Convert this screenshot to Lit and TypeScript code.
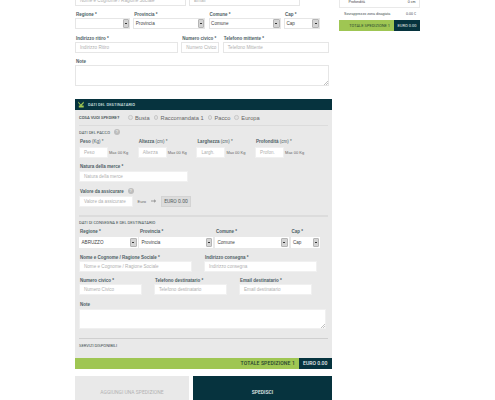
import { LitElement, html, css } from "lit";
import { customElement } from "lit/decorators.js";

@customElement("app-root")
export class AppRoot extends LitElement {
  static styles = css`
    :host { display: block; width: 495px; height: 400px; overflow: hidden; background: #fff; font-family: "Liberation Sans", Arial, sans-serif; color: #333; }
    .page { display: flex; align-items: flex-start; padding-left: 75px; }
    .main { width: 257px; flex: none; }
    .side { width: 81px; flex: none; margin-left: 7px; margin-right: 0; }
    .row { display: flex; }
    .fld { display: flex; flex-direction: column; flex: none; }
    label { display: block; font: bold 4.5px/7px "Liberation Sans", sans-serif; color: #4d6065; height: 7px; white-space: nowrap; padding-left: 1px; }
    label span { font-weight: normal; }
    .inp { box-sizing: border-box; background: #fff; border: 1px solid #e6e6e6; font-size: 4.6px; color: #b0b0b0; display: flex; align-items: center; padding-left: 4px; white-space: nowrap; overflow: hidden; }
    .panel .inp { border-color: #f0f0f0; }
    .h11 { height: 11px; }
    .sel { box-sizing: border-box; background: #fff; border: 1px solid #e6e6e6; display: flex; align-items: center; justify-content: space-between; font-size: 4.6px; color: #444; padding-left: 1.5px; }
    .panel .sel { border-color: #fff; }
    .arr { box-sizing: border-box; width: 6.5px; align-self: stretch; background: #d4d4d4; border: 1px solid #b5b5b5; border-radius: 1px; display: flex; align-items: center; justify-content: center; }
    .arr i { display: block; width: 2px; height: 1px; background: #333; }
    .top { height: 5.6px; margin-bottom: 5.4px; }
    .top .inp { height: 11px; flex: none; margin-top: -5.4px; }
    .top .inp.a { margin-right: 3px; }
    .w111 { width: 111px; }
    .ta { box-sizing: border-box; background: #fff; border: 1px solid #e6e6e6; position: relative; }
    .ta1 { width: 254px; height: 21px; }
    .ta2 { width: 247px; height: 20px; margin-top: .8px; border-color: #f0f0f0; }
    .grip { position: absolute; right: 0; bottom: 0; }
    .head { height: 11.4px; background: #06333e; display: flex; align-items: center; gap: 4px; padding-left: 3px; margin-top: 12.6px; font: 500 4px "Roboto", sans-serif; color: #d8e4e6; box-sizing: border-box; letter-spacing: .1px; }
    .panel { background: #e9e9e9; padding: 0 4px; height: 248.3px; box-sizing: border-box; }
    .what { display: flex; align-items: center; height: 15px; border-bottom: 1.5px solid #dcdcdc; font: 4.1px "Roboto", sans-serif; color: #3a4a4d; white-space: nowrap; }
    .what b { font-weight: 500; width: 49px; flex: none; }
    .radio { font: 5.7px "Liberation Sans", sans-serif; color: #666; display: flex; align-items: center; gap: 2.5px; margin-right: 4px; }
    .radio::before { content: ""; box-sizing: border-box; width: 4.5px; height: 4.5px; border: 1px solid #c9c9c9; border-radius: 50%; background: #e2e2e2; }
    .sec { font: 4.1px/7px "Roboto", sans-serif; color: #3a4a4d; display: flex; align-items: center; gap: 4px; height: 7px; white-space: nowrap; }
    .lab-q { font: bold 4.5px/7px "Liberation Sans", sans-serif; color: #4d6065; padding-left: 1px; gap: 4px; }
    .q { display: flex; align-items: center; justify-content: center; width: 6px; height: 6px; border-radius: 50%; background: #bdbdbd; color: #ececec; font: bold 4px/6px "Liberation Sans", sans-serif; }
    .max { font-size: 4px; color: #666; margin-left: 1px; white-space: nowrap; }
    .mr { display: flex; align-items: center; height: 11px; }
    .dim { width: 58.7px; }
    .dim .inp { width: 29px; height: 11px; }
    .val .inp { width: 54px; height: 11px; }
    .gap1 { margin-top: 1.5px; }
    .gap2 { margin-top: 1.7px; }
    .gap3 { margin-top: 1.2px; }
    .eu { margin-left: 4.5px; margin-right: 5px; }
    .arrow { margin-right: 5px; }
    .euro { background: #dcdcdc; height: 11px; width: 30px; display: flex; align-items: center; justify-content: center; font: 5px "Roboto", sans-serif; color: #55605f; border: 1px solid #d3d3d3; box-sizing: border-box; }
    .div { height: 1px; background: #cfcfcf; }
    .rule { height: 1.7px; background: #dcdcdc; margin-top: 8.3px; }
    .sp-r2 { margin-top: 5.6px; }
    .sp-note { margin-top: 5.6px; }
    .m-sec1 { margin-top: 2.7px; }
    .m-dims { margin-top: 2.3px; }
    .m-nat { margin-top: 5px; }
    .m-val { margin-top: 5.2px; }
    .m-sec2 { margin-top: 2.8px; }
    .m-sels { margin-top: 1.7px; }
    .m-nome { margin-top: 6px; }
    .m-num { margin-top: 5.7px; }
    .m-note { margin-top: 5.5px; }
    .m-div { margin-top: 9.3px; width: 249px; }
    .m-serv { margin-top: 3.3px; }
    .w-nat { width: 109px; }
    .tot { display: flex; height: 11px; background: #9fc653; justify-content: flex-end; font: 500 5.1px/11px "Roboto", sans-serif; color: #1f3e2f; }
    .tot .pad { margin-right: 3.5px; letter-spacing: .12px; }
    .tot .e { background: #06333e; color: #e7efef; width: 33.5px; text-align: center; }
    .btns { display: flex; gap: 4px; margin-top: 7px; }
    .btn { height: 40px; box-sizing: border-box; display: flex; align-items: flex-start; justify-content: center; font: 5px/7px "Roboto", sans-serif; padding-top: 13px; }
    .b1 { width: 114px; background: #e9e9e9; color: #b3b3b3; }
    .b2 { width: 139px; background: #06333e; color: #e7efef; font-weight: 500; }
    .box { border: 1px solid #e9e9e9; border-top: 0; height: 8px; box-sizing: border-box; display: flex; justify-content: space-between; align-items: flex-start; padding: 0 3.5px 0 8.5px; font-size: 3.6px; line-height: 5px; color: #444; margin-bottom: 4px; }
    .sur { display: flex; justify-content: space-between; font-size: 3.6px; line-height: 5px; color: #3d4c50; padding: 0 4px 0 5px; margin-bottom: 3px; white-space: nowrap; }
    .stot { display: flex; height: 11px; background: #9fc653; font: 4px/11px "Roboto", sans-serif; color: #2c4a30; }
    .stot .l { flex: 1; text-align: right; padding-right: 4px; white-space: nowrap; }
    .stot .e { background: #06333e; color: #e7efef; width: 26px; text-align: center; }
  `;

  private f(w: number, mr: number, label: string, ph: string) {
    return html`<div class="fld" style="width:${w}px;margin-right:${mr}px"><label>${label}</label><div class="inp h11">${ph}</div></div>`;
  }

  private s(w: number, mr: number, label: string, val: string, gap = "") {
    return html`<div class="fld" style="width:${w}px;margin-right:${mr}px"><label>${label}</label><div class="sel h11 ${gap}"><span>${val}</span><span class="arr"><i></i></span></div></div>`;
  }

  private dim(label: string, unit: string, ph: string) {
    return html`<div class="fld dim"><label>${label} <span>${unit}</span></label><div class="mr gap1"><div class="inp">${ph}</div><span class="max">Max 00 Kg</span></div></div>`;
  }

  private grip() {
    return html`<svg class="grip" width="4" height="4" viewBox="0 0 4 4"><path d="M0 4 4 0M2 4 4 2" stroke="#999" stroke-width=".6"/></svg>`;
  }

  render() {
    return html`<div class="page">
      <div class="main">
        <div class="row top">
          <div class="inp a w111">Nome e Cognome / Ragione Sociale</div>
          <div class="inp w111">Email</div>
        </div>
        <div class="row">
          ${this.s(55, 3.3, "Regione *", "")}${this.s(72, 3.3, "Provincia *", "Provincia")}${this.s(72, 3.3, "Comune *", "Comune")}${this.s(36, 0, "Cap *", "Cap")}
        </div>
        <div class="row sp-r2">
          ${this.f(103, 3.3, "Indirizzo ritiro *", "Indirizzo Ritiro")}${this.f(38, 3.5, "Numero civico *", "Numero Civico")}${this.f(106.5, 0, "Telefono mittente *", "Telefono Mittente")}
        </div>
        <div class="sp-note">
          <label>Note</label>
          <div class="ta ta1">${this.grip()}</div>
        </div>

        <div class="head">
          <svg width="6" height="7" viewBox="0 0 6 7"><path d="M.3 .5 2.8 3.5 5.7 .5V2.2L3.6 4.4 5.7 4.4V6.5H.8V4.6L2.4 4.4 .3 2Z" fill="#9fc653"/></svg>
          <span>DATI DEL DESTINATARIO</span>
        </div>
        <div class="panel">
          <div class="what"><b>COSA VUOI SPEDIRE?</b>
            <span class="radio">Busta</span><span class="radio">Raccomandata 1</span><span class="radio">Pacco</span><span class="radio">Europa</span>
          </div>
          <div class="sec m-sec1">DATI DEL PACCO <i class="q">?</i></div>
          <div class="row m-dims">
            ${this.dim("Peso", "(Kg) *", "Peso")}${this.dim("Altezza", "(cm) *", "Altezza")}${this.dim("Larghezza", "(cm) *", "Largh.")}${this.dim("Profondità", "(cm) *", "Profon.")}
          </div>
          <div class="row m-nat">
            <div class="fld w-nat"><label>Natura della merce *</label><div class="inp h11 gap2">Natura della merce</div></div>
          </div>
          <div class="m-val val">
            <div class="sec lab-q">Valore da assicurare <i class="q">?</i></div>
            <div class="mr gap3">
              <div class="inp">Valore da assicurare</div>
              <span class="max eu">Euro</span>
              <svg class="arrow" width="5" height="4" viewBox="0 0 5 4"><path d="M0 2H4.5M3 .7 4.5 2 3 3.3" stroke="#666" stroke-width=".6" fill="none"/></svg>
              <div class="euro">EURO 0.00</div>
            </div>
          </div>
          <div class="rule"></div>
          <div class="sec m-sec2">DATI DI CONSEGNA E DEL DESTINATARIO</div>
          <div class="row m-sels">
            ${this.s(58.5, 1.5, "Regione *", "ABRUZZO", "gap1")}${this.s(74, 2, "Provincia *", "Provincia", "gap1")}${this.s(73.5, 2, "Comune *", "Comune", "gap1")}${this.s(29.5, 0, "Cap *", "Cap", "gap1")}
          </div>
          <div class="row m-nome">
            ${this.f(113.3, 11.7, "Nome e Cognome / Ragione Sociale *", "Nome e Cognome / Ragione Sociale")}${this.f(113.3, 0, "Indirizzo consegna *", "Indirizzo consegna")}
          </div>
          <div class="row m-num">
            ${this.f(63, 12, "Numero civico *", "Numero Civico")}${this.f(73.3, 11.7, "Telefono destinatario *", "Telefono destinatario")}${this.f(73.3, 0, "Email destinatario *", "Email destinatario")}
          </div>
          <div class="m-note">
            <label>Note</label>
            <div class="ta ta2">${this.grip()}</div>
          </div>
          <div class="div m-div"></div>
          <div class="sec m-serv">SERVIZI DISPONIBILI</div>
        </div>
        <div class="tot"><span class="pad">TOTALE SPEDIZIONE 1</span><span class="e">EURO 0.00</span></div>
        <div class="btns"><div class="btn b1">AGGIUNGI UNA SPEDIZIONE</div><div class="btn b2">SPEDISCI</div></div>
      </div>
      <div class="side">
        <div class="box"><span>Profondità</span><span>0 cm</span></div>
        <div class="sur"><span>Sovrapprezzo zona disagiata</span><span>0.00 €</span></div>
        <div class="stot"><span class="l">TOTALE SPEDIZIONE 1</span><span class="e">EURO 0.00</span></div>
      </div>
    </div>`;
  }
}
